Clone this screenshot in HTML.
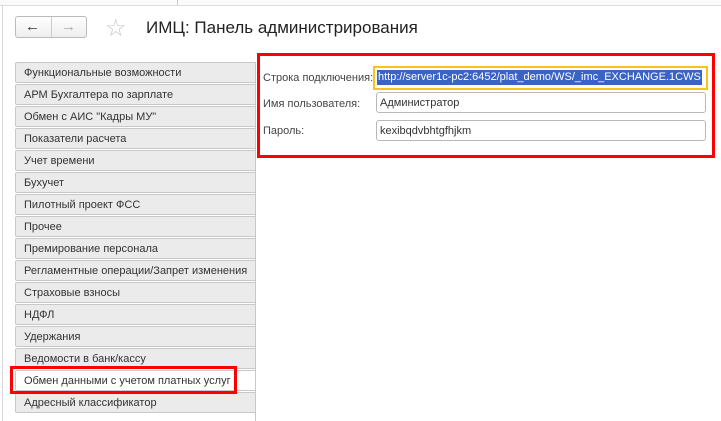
<!DOCTYPE html><html><head><meta charset="utf-8"><style>
body{margin:0;width:721px;height:421px;background:#fff;font-family:"Liberation Sans",sans-serif;position:relative;overflow:hidden}
.a{position:absolute}
.tab{position:absolute;left:15px;width:240px;height:21px;background:#ebebeb;border:1px solid #c8c8c8;border-right:none;box-sizing:border-box;font-size:11px;color:#333;padding:4px 0 0 8px;border-radius:2px 0 0 2px;white-space:nowrap}
.fld{position:absolute;left:376px;width:330px;height:21px;border:1px solid #b8b8b8;border-radius:3px;box-sizing:border-box;font-size:11px;padding:4px 0 0 3px;color:#333}
.lbl{position:absolute;left:263px;font-size:11px;color:#444}
</style></head><body>
<div class="a" style="left:0;top:0;width:721px;height:5px;border-bottom:1px solid #ddd;background:#fafafa"></div>
<div class="a" style="left:177px;top:0;width:1px;height:5px;background:#ccc"></div>
<div class="a" style="left:2px;top:5px;width:1px;height:416px;background:#d8d8d8"></div>
<div class="a" style="left:15px;top:16px;width:72px;height:22px;border:1px solid #bbb;border-radius:3px;box-sizing:border-box;background:linear-gradient(#fff,#eee)"></div>
<div class="a" style="left:51px;top:17px;width:1px;height:20px;background:#ccc"></div>
<div class="a" style="left:25px;top:18px;font-size:15px;color:#333;font-weight:bold">←</div>
<div class="a" style="left:61px;top:18px;font-size:15px;color:#aaa;font-weight:bold">→</div>
<div class="a" style="left:105px;top:14px;font-size:24px;color:#c8c8c8">☆</div>
<div class="a" style="left:146px;top:18px;font-size:17px;color:#222">ИМЦ: Панель администрирования</div>
<div class="a" style="left:255px;top:62px;width:1px;height:359px;background:#c8c8c8"></div>
<div class="tab" style="top:62px">Функциональные возможности</div>
<div class="tab" style="top:84px">АРМ Бухгалтера по зарплате</div>
<div class="tab" style="top:106px">Обмен с АИС "Кадры МУ"</div>
<div class="tab" style="top:128px">Показатели расчета</div>
<div class="tab" style="top:150px">Учет времени</div>
<div class="tab" style="top:172px">Бухучет</div>
<div class="tab" style="top:194px">Пилотный проект ФСС</div>
<div class="tab" style="top:216px">Прочее</div>
<div class="tab" style="top:238px">Премирование персонала</div>
<div class="tab" style="top:260px">Регламентные операции/Запрет изменения</div>
<div class="tab" style="top:282px">Страховые взносы</div>
<div class="tab" style="top:304px">НДФЛ</div>
<div class="tab" style="top:326px">Удержания</div>
<div class="tab" style="top:348px">Ведомости в банк/кассу</div>
<div class="tab" style="top:370px;background:#fff">Обмен данными с учетом платных услуг</div>
<div class="tab" style="top:392px">Адресный классификатор</div>
<div class="a" style="left:10px;top:366px;width:227px;height:28px;border:3px solid #f00;box-sizing:border-box"></div>
<div class="a" style="left:257px;top:53px;width:458px;height:105px;border:3px solid #f00;box-sizing:border-box"></div>
<div class="lbl" style="top:72px">Строка подключения:</div>
<div class="lbl" style="top:98px">Имя пользователя:</div>
<div class="lbl" style="top:125px">Пароль:</div>
<div class="a" style="left:373px;top:66px;width:335px;height:24px;border:2px solid #f5c518;box-sizing:border-box"></div>
<div class="a" style="left:377px;top:70px;font-size:11px;color:#fff;background:#3b63c4;white-space:nowrap;padding:0 1px;line-height:15px;letter-spacing:0">http://server1c-pc2:6452/plat_demo/WS/_imc_EXCHANGE.1CWS</div>
<div class="fld" style="top:92px">Администратор</div>
<div class="fld" style="top:120px">kexibqdvbhtgfhjkm</div>
</body></html>
